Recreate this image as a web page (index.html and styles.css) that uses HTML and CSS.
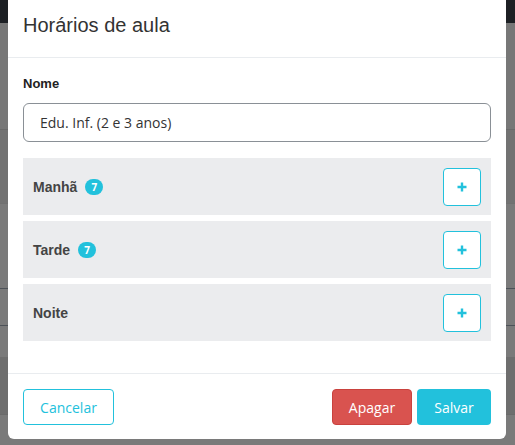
FILE: index.html
```html
<!DOCTYPE html>
<html lang="pt-BR">
<head>
<meta charset="utf-8">
<title>Horários de aula</title>
<link rel="stylesheet" href="styles.css">
</head>
<body>
<div class="page">
  <div class="topbar"></div>
  <div class="band b1"></div>
  <div class="band b2"></div>
  <div class="band b3"></div>
  <div class="band b4"></div>
  <div class="band b5"></div>
  <div class="band b6"></div>
  <div class="band b7"></div>
</div>
<div class="modal">
  <div class="modal-header">
    <h1 class="modal-title">Horários de aula</h1>
  </div>
  <div class="modal-body">
    <label class="label" for="nome">Nome</label>
    <input class="input" id="nome" type="text" value="Edu. Inf. (2 e 3 anos)">
    <div class="panels">
      <div class="panel">
        <span class="panel-title">Manhã</span>
        <span class="badge">7</span>
        <button class="add" type="button"><svg width="10" height="10" viewBox="0 0 10 10"><path d="M5 0.5v9M0.5 5h9" stroke="#22c1dc" stroke-width="2.4"/></svg></button>
      </div>
      <div class="panel">
        <span class="panel-title">Tarde</span>
        <span class="badge">7</span>
        <button class="add" type="button"><svg width="10" height="10" viewBox="0 0 10 10"><path d="M5 0.5v9M0.5 5h9" stroke="#22c1dc" stroke-width="2.4"/></svg></button>
      </div>
      <div class="panel">
        <span class="panel-title">Noite</span>
        <button class="add" type="button"><svg width="10" height="10" viewBox="0 0 10 10"><path d="M5 0.5v9M0.5 5h9" stroke="#22c1dc" stroke-width="2.4"/></svg></button>
      </div>
    </div>
  </div>
  <div class="modal-footer">
    <button class="btn btn-outline" type="button">Cancelar</button>
    <div class="spacer"></div>
    <button class="btn btn-danger" type="button">Apagar</button>
    <button class="btn btn-info" type="button">Salvar</button>
  </div>
</div>
</body>
</html>
```
FILE: styles.css
```css
html, body {
  margin: 0;
  padding: 0;
}
body {
  width: 515px;
  height: 445px;
  overflow: hidden;
  background: #7a7a7a;
  position: relative;
  font-family: "Liberation Sans", Arial, sans-serif;
}
.page {
  position: absolute;
  inset: 0;
  display: flex;
  flex-direction: column;
}
.topbar {
  height: 31px;
  background: #1d2024;
}
.band { flex: none; }
.b1 { height: 106px; background: #777777; }
.b2 { height: 73px; background: #727272; border-top: 1px solid #6a6a6a; }
.b3 { height: 84px; background: #7a7a7a; border-top: 1px solid #707070; }
.b4 { height: 36px; background: #7a7a7a; border-top: 1px solid #4d5258; }
.b5 { height: 31px; background: #7a7a7a; border-top: 1px solid #4d5258; }
.b6 { height: 57px; background: #6e6e6e; }
.b7 { height: 30px; background: #7a7a7a; border-top: 1px solid #6a6a6a; }

.modal {
  position: absolute;
  left: 8px;
  top: -6px;
  width: 498px;
  height: 445px;
  background: #fff;
  border-radius: 6px;
  display: flex;
  flex-direction: column;
  box-sizing: border-box;
}
.modal-header {
  height: 64px;
  box-sizing: border-box;
  border-bottom: 1px solid #e9ecef;
  padding: 19px 15px 0;
}
.modal-title {
  margin: 0;
  font-weight: 400;
  font-size: 20px;
  line-height: 24px;
  color: #333;
}
.modal-body {
  padding: 18px 15px 0;
  flex: 1;
}
.label {
  display: block;
  font-weight: 700;
  font-size: 13px;
  line-height: 16px;
  color: #222;
  margin-bottom: 11px;
}
.input {
  display: block;
  width: 100%;
  box-sizing: border-box;
  height: 39px;
  border: 1px solid #8a9096;
  border-radius: 6px;
  padding: 0 16px;
  font-family: "Open Sans", sans-serif;
  font-size: 14px;
  color: #333;
  background: #fff;
  margin: 0;
}
.panels {
  margin-top: 16px;
  display: flex;
  flex-direction: column;
  gap: 6px;
}
.panel {
  height: 57px;
  background: #ebecee;
  display: flex;
  align-items: center;
  padding: 0 10px;
}
.panel-title {
  font-weight: 700;
  font-size: 14px;
  color: #444;
}
.badge {
  margin-left: 8px;
  background: #22c1dc;
  color: #fff;
  font-family: "Open Sans", sans-serif;
  font-weight: 700;
  font-size: 10px;
  line-height: 16px;
  height: 16px;
  min-width: 18px;
  border-radius: 8px;
  text-align: center;
  box-sizing: border-box;
}
.add {
  margin-left: auto;
  width: 38px;
  height: 38px;
  background: #fff;
  border: 1px solid #22c1dc;
  border-radius: 4px;
  display: flex;
  align-items: center;
  justify-content: center;
  padding: 0;
}
.modal-footer {
  height: 66px;
  box-sizing: border-box;
  border-top: 1px solid #e9ecef;
  display: flex;
  align-items: flex-start;
  padding: 15px 15px 0;
  gap: 5px;
}
.spacer { flex: 1; }
.btn {
  height: 36px;
  border-radius: 4px;
  font-family: "Open Sans", sans-serif;
  font-size: 14px;
  padding: 0 14px;
  border: 1px solid transparent;
  margin: 0;
}
.btn-outline {
  width: 91px;
  background: #fff;
  border-color: #22c1dc;
  color: #22c1dc;
}
.btn-danger {
  width: 80px;
  background: #d9534f;
  border-color: #c9423e;
  color: #fff;
}
.btn-info {
  width: 74px;
  background: #22c1dc;
  color: #fff;
}
```
